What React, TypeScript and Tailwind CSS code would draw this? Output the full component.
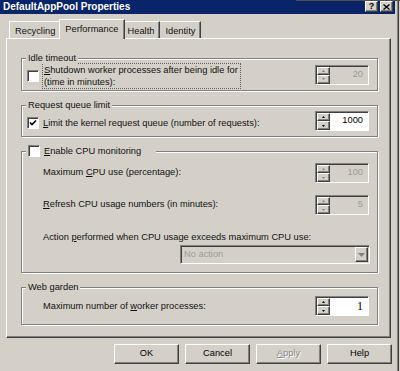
import React from "react";

const FONT = { fontFamily: '"Liberation Sans", Arial, sans-serif' };

const raised =
  "bg-[#d4d0c8] border border-t-white border-l-white border-r-[#404040] border-b-[#404040] shadow-[inset_-1px_-1px_0_#808080]";
const sunken =
  "border border-t-[#808080] border-l-[#808080] border-r-white border-b-white shadow-[inset_1px_1px_0_#404040]";

function Check({ checked }: { checked?: boolean }) {
  return (
    <div className={`w-[12px] h-[12px] bg-white shrink-0 ${sunken} flex items-center justify-center`}>
      {checked && (
        <svg width="8" height="8" viewBox="0 0 8 8">
          <path d="M1 3.5 L3 5.5 L7 1.5" stroke="#000" strokeWidth="1.6" fill="none" />
        </svg>
      )}
    </div>
  );
}

function Arrow({ up, color }: { up?: boolean; color: string }) {
  return (
    <svg width="3" height="2" viewBox="0 0 3 2">
      {up ? <path d="M0 2 L1.5 0 L3 2 Z" fill={color} /> : <path d="M0 0 L3 0 L1.5 2 Z" fill={color} />}
    </svg>
  );
}

function Spinner({ value, enabled, serif }: { value: string; enabled?: boolean; serif?: boolean }) {
  return (
    <div className={`w-[54px] h-[20px] flex shrink-0 ${sunken} ${enabled ? "bg-white" : "bg-[#d4d0c8]"}`}>
      <div className="flex flex-col w-[14px] pt-[1px] pl-[1px]">
        <div className={`h-[8px] flex items-center justify-center ${raised}`}>
          <Arrow up color={enabled ? "#000" : "#808080"} />
        </div>
        <div className={`h-[9px] flex items-center justify-center ${raised}`}>
          <Arrow color={enabled ? "#000" : "#808080"} />
        </div>
      </div>
      <div
        className={`flex-1 flex items-center justify-end pr-[5px] ${serif ? "text-[12px]" : "text-[9.3px]"} ${
          enabled ? "text-black" : "text-[#9a9a9a]"
        }`}
        style={serif ? { fontFamily: '"Liberation Serif", serif' } : undefined}
      >
        {value}
      </div>
    </div>
  );
}

function Group({ label, h, children }: { label: React.ReactNode; h: string; children: React.ReactNode }) {
  return (
    <div
      className={`relative ml-[14px] w-[357px] ${h} border border-[#808080] shadow-[inset_1px_1px_0_#fff,1px_1px_0_#fff]`}
    >
      <div className="absolute -top-[7px] left-[4px] px-[2px] bg-[#d4d0c8] leading-[12px] whitespace-nowrap">{label}</div>
      {children}
    </div>
  );
}

function Tab({ label, selected, first }: { label: string; selected?: boolean; first?: boolean }) {
  if (selected) {
    return (
      <div className="relative z-10 -mx-[2px] -mb-[1px] h-[20px] px-[5px] pt-[3px] bg-[#d4d0c8] border-t border-l border-t-white border-l-white border-r border-r-[#404040] shadow-[inset_-1px_0_0_#808080] flex items-start">
        {label}
      </div>
    );
  }
  return (
    <div
      className={`h-[17px] px-[5px] pt-[3px] bg-[#d4d0c8] border-t border-t-white ${
        first ? "border-l border-l-white" : ""
      } border-r border-r-[#404040] shadow-[inset_-1px_0_0_#808080] flex items-start`}
    >
      {label}
    </div>
  );
}

function Btn({ children, disabled }: { children: React.ReactNode; disabled?: boolean }) {
  return (
    <div
      className={`w-[65px] h-[20px] flex items-center justify-center ${raised} ${
        disabled ? "text-[#8a8a8a] [text-shadow:1px_1px_0_#fff]" : "text-black"
      }`}
    >
      {children}
    </div>
  );
}

export default function App() {
  return (
    <div className="relative w-[400px] h-[371px] overflow-hidden bg-[#d4d0c8] text-[9.3px] text-[#111]" style={FONT}>
      <div className="absolute top-0 left-[296px] right-0 h-[1px] bg-[#505050] z-20" />
      <div className="w-[399px] h-full border-r border-r-[#404040] shadow-[inset_-1px_0_0_#808080] pr-[3px]">
        {/* title bar */}
        <div className="h-[14px] bg-[#0a246a] flex items-center justify-between pl-[3px] pr-[2px]">
          <span className="text-white font-bold text-[10px] leading-[12px]">DefaultAppPool Properties</span>
          <div className="flex gap-[2px] self-start mt-[1px]">
            <div className={`w-[13px] h-[11px] flex items-center justify-center text-[9px] font-bold leading-none text-black ${raised}`}>?</div>
            <div className={`w-[13px] h-[11px] flex items-center justify-center ${raised}`}>
              <svg width="7" height="6" viewBox="0 0 7 6">
                <path d="M0.5 0.5 L6.5 5.5 M6.5 0.5 L0.5 5.5" stroke="#000" strokeWidth="1.4" />
              </svg>
            </div>
          </div>
        </div>

        {/* tabs */}
        <div className="flex items-end pl-[9px] mt-[7px] h-[17px]">
          <Tab label="Recycling" first />
          <Tab label="Performance" selected />
          <Tab label="Health" />
          <Tab label="Identity" />
        </div>

        {/* panel */}
        <div className="ml-[6px] w-[385px] h-[300px] border border-t-white border-l-white border-r-[#404040] border-b-[#404040] shadow-[inset_-1px_-1px_0_#808080] pt-[19px] flex flex-col gap-[14px]">
          <Group label="Idle timeout" h="h-[33px]">
            <div className="h-full flex items-center justify-between pl-[5px] pr-[8px]">
              <div className="flex items-center gap-[3px] mt-[2px]">
                <Check />
                <div className="border border-dotted border-[#606060] pl-[1px] pr-[2px] leading-[12px] whitespace-nowrap">
                  <u className="underline-offset-[1px]">S</u>hutdown worker processes after being idle for
                  <br />
                  (time in minutes):
                </div>
              </div>
              <Spinner value="20" />
            </div>
          </Group>

          <Group label="Request queue limit" h="h-[32px]">
            <div className="h-full flex items-center justify-between pl-[5px] pr-[8px]">
              <div className="flex items-center gap-[4px] mt-[3px]">
                <Check checked />
                <span className="leading-[12px] whitespace-nowrap">
                  <u className="underline-offset-[1px]">L</u>imit the kernel request queue (number of requests):
                </span>
              </div>
              <Spinner value="1000" enabled />
            </div>
          </Group>

          <Group
            label={
              <div className="flex items-center gap-[4px] pr-[13px]">
                <Check />
                <span>
                  <u className="underline-offset-[1px]">E</u>nable CPU monitoring
                </span>
              </div>
            }
            h="h-[122px]"
          >
            <div className="flex flex-col pl-[21px] pr-[8px] pt-[11px]">
              <div className="flex items-center justify-between h-[20px]">
                <span>
                  Maximum <u className="underline-offset-[1px]">C</u>PU use (percentage):
                </span>
                <Spinner value="100" />
              </div>
              <div className="flex items-center justify-between h-[20px] mt-[12px]">
                <span>
                  <u className="underline-offset-[1px]">R</u>efresh CPU usage numbers (in minutes):
                </span>
                <Spinner value="5" />
              </div>
              <div className="mt-[16px] leading-[12px]">
                Action <u className="underline-offset-[1px]">p</u>erformed when CPU usage exceeds maximum CPU use:
              </div>
              <div className={`self-end w-[190px] h-[19px] mt-[2px] -mr-[1px] flex items-center ${sunken} bg-[#d4d0c8]`}>
                <span className="flex-1 pl-[3px] text-[#9a9a9a]">No action</span>
                <div className={`w-[13px] h-[15px] mr-[1px] flex items-center justify-center ${raised}`}>
                  <svg width="7" height="4" viewBox="0 0 7 4">
                    <path d="M0 0 L7 0 L3.5 4 Z" fill="#808080" />
                  </svg>
                </div>
              </div>
            </div>
          </Group>

          <Group label="Web garden" h="h-[38px]">
            <div className="h-full flex items-center justify-between pl-[21px] pr-[8px]">
              <span className="mt-[2px]">
                Maximum number of <u className="underline-offset-[1px]">w</u>orker processes:
              </span>
              <Spinner value="1" enabled serif />
            </div>
          </Group>
        </div>

        {/* buttons */}
        <div className="flex justify-end gap-[6px] mt-[6px] pr-[3px]">
          <Btn>OK</Btn>
          <Btn>Cancel</Btn>
          <Btn disabled>
            <span>
              <u>A</u>pply
            </span>
          </Btn>
          <Btn>Help</Btn>
        </div>
      </div>
    </div>
  );
}
